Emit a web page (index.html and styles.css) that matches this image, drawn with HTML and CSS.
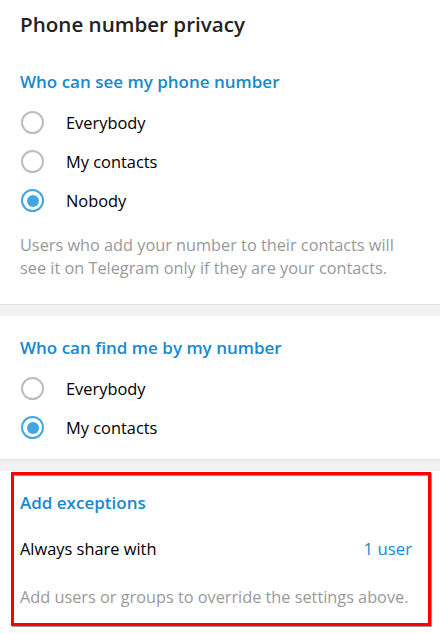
FILE: index.html
```html
<!DOCTYPE html>
<html>
<head>
<meta charset="utf-8">
<link rel="stylesheet" href="styles.css">
</head>
<body>
<div class="page">
  <section class="panel panel-first">
    <h1 class="title">Phone number privacy</h1>
    <h2 class="header header-first">Who can see my phone number</h2>
    <div class="radios radios-first">
      <div class="radio-row"><span class="radio"></span><span class="label">Everybody</span></div>
      <div class="radio-row"><span class="radio"></span><span class="label">My contacts</span></div>
      <div class="radio-row"><span class="radio checked"></span><span class="label">Nobody</span></div>
    </div>
    <p class="about about-first">Users who add your number to their contacts will see it on Telegram only if they are your contacts.</p>
  </section>
  <div class="divider"></div>
  <section class="panel panel-second">
    <h2 class="header header-second">Who can find me by my number</h2>
    <div class="radios radios-second">
      <div class="radio-row"><span class="radio"></span><span class="label">Everybody</span></div>
      <div class="radio-row"><span class="radio checked"></span><span class="label">My contacts</span></div>
    </div>
  </section>
  <div class="divider"></div>
  <section class="panel panel-third">
    <h2 class="header header-third">Add exceptions</h2>
    <div class="share-row"><span class="share-label">Always share with</span><span class="share-value">1 user</span></div>
    <p class="about about-third">Add users or groups to override the settings above.</p>
    <div class="highlight"></div>
  </section>
</div>
</body>
</html>
```
FILE: styles.css
```css
* { box-sizing: border-box; }
html, body { margin: 0; padding: 0; background: #ffffff; }
body {
  font-family: "Open Sans", "Liberation Sans", sans-serif;
  width: 440px;
  height: 634px;
  overflow: hidden;
}
.page { display: flex; flex-direction: column; }
.panel { background: #fff; padding: 0 28px 0 20px; display: flex; flex-direction: column; }
.panel-first { height: 304px; }
.panel-second { height: 143px; }
.panel-third { position: relative; flex: 1; }

.title {
  margin: 0;
  height: 48px;
  line-height: 48px;
  font-size: 20.6px;
  font-weight: 600;
  color: #222;
}
.header {
  margin: 0;
  height: 20px;
  line-height: 20px;
  font-size: 17px;
  font-weight: 600;
  color: #168acd;
  white-space: nowrap;
}
.header-first { margin-top: 24px; }
.header-second { margin-top: 22px; }
.header-third { margin-top: 22px; }

.radios { display: flex; flex-direction: column; }
.radios-first { margin-top: 11px; }
.radios-second { margin-top: 11px; }
.radio-row {
  height: 39px;
  display: flex;
  align-items: center;
}
.radio {
  width: 23px;
  height: 23px;
  border: 2px solid #bdbdbd;
  border-radius: 50%;
  margin-left: 1px;
  flex: none;
  position: relative;
}
.radio.checked { border-color: #40a7e3; }
.radio.checked::after {
  content: "";
  position: absolute;
  left: 3.5px;
  top: 3.5px;
  width: 12px;
  height: 12px;
  border-radius: 50%;
  background: #40a7e3;
}
.label {
  margin-left: 22px;
  font-size: 16.4px;
  color: #000;
}
.about {
  margin: 0;
  font-size: 16.3px;
  color: #999999;
}
.about-first { margin-top: 14px; line-height: 23px; }
.about-third { margin-top: 28px; line-height: 20px; white-space: nowrap; }

.divider {
  height: 12px;
  background: #f1f1f1;
  box-shadow: inset 0 2px 1px -1px #e2e2e2;
}

.share-row {
  margin-top: 26px;
  height: 20px;
  line-height: 20px;
  display: flex;
  justify-content: space-between;
  font-size: 16.4px;
}
.share-label { color: #000; }
.share-value { color: #168acd; font-size: 16.8px; }

.highlight {
  position: absolute;
  left: 11px;
  top: 1px;
  width: 420px;
  height: 154px;
  border: 3px solid #ff0000;
  box-shadow: 1px 1px 0 #9a9a9a, inset 0 1px 0 #9a9a9a;
  pointer-events: none;
}
```
